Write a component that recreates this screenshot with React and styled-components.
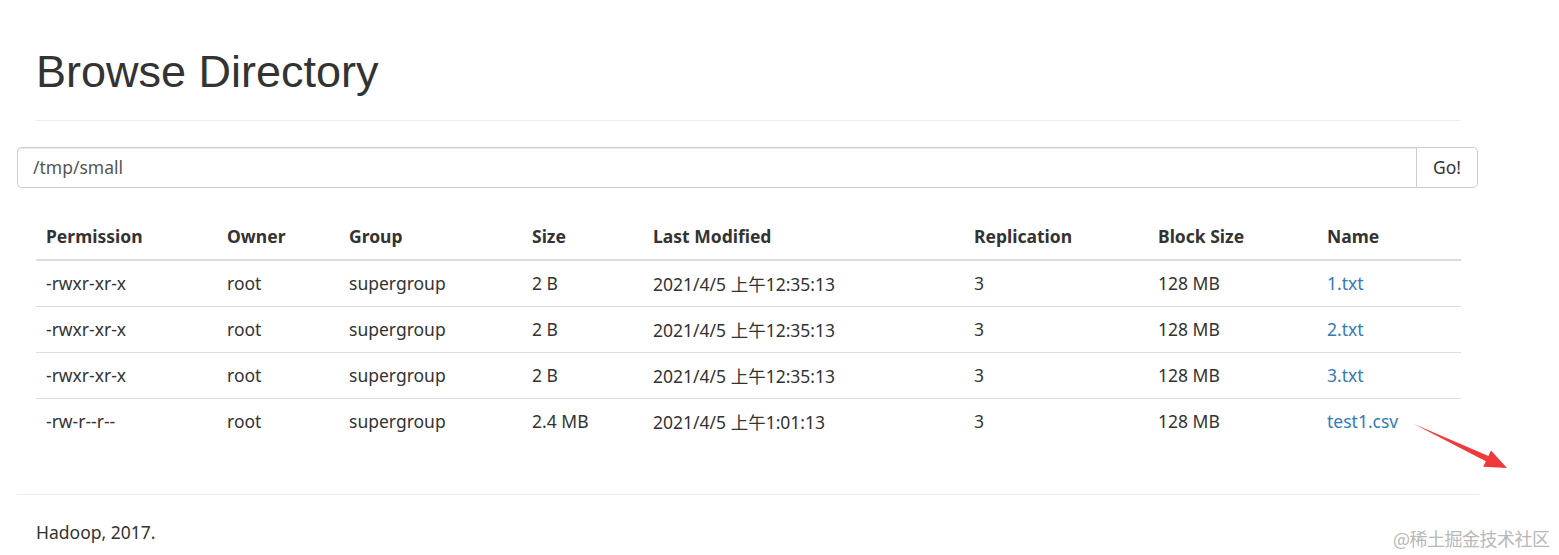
import React from "react";
import styled, { createGlobalStyle } from "styled-components";

const GlobalStyle = createGlobalStyle`
  body {
    margin: 0;
    background: #fff;
    color: #333;
    font-family: "Noto Sans", "Noto Sans CJK SC", sans-serif;
    font-size: 17.5px;
  }
`;

const files = [
  { perm: "-rwxr-xr-x", owner: "root", group: "supergroup", size: "2 B", modified: "2021/4/5 上午12:35:13", repl: "3", block: "128 MB", name: "1.txt" },
  { perm: "-rwxr-xr-x", owner: "root", group: "supergroup", size: "2 B", modified: "2021/4/5 上午12:35:13", repl: "3", block: "128 MB", name: "2.txt" },
  { perm: "-rwxr-xr-x", owner: "root", group: "supergroup", size: "2 B", modified: "2021/4/5 上午12:35:13", repl: "3", block: "128 MB", name: "3.txt" },
  { perm: "-rw-r--r--", owner: "root", group: "supergroup", size: "2.4 MB", modified: "2021/4/5 上午1:01:13", repl: "3", block: "128 MB", name: "test1.csv" },
];

const columns = [
  { label: "Permission", width: 181 },
  { label: "Owner", width: 122 },
  { label: "Group", width: 183 },
  { label: "Size", width: 121 },
  { label: "Last Modified", width: 321 },
  { label: "Replication", width: 184 },
  { label: "Block Size", width: 169 },
  { label: "Name", width: 144 },
];

const App = () => {
  return (
    <>
      <GlobalStyle />
      <Page>
        <PageHeader>
          <Title>Browse Directory</Title>
        </PageHeader>

        <InputGroup>
          <PathInput defaultValue="/tmp/small" />
          <GoButton>Go!</GoButton>
        </InputGroup>

        <TableWrap>
          <Table>
            <colgroup>
              {columns.map((c) => (
                <col key={c.label} style={{ width: c.width }} />
              ))}
            </colgroup>
            <thead>
              <tr>
                {columns.map((c) => (
                  <Th key={c.label}>{c.label}</Th>
                ))}
              </tr>
            </thead>
            <tbody>
              {files.map((f) => (
                <tr key={f.name}>
                  <Td>{f.perm}</Td>
                  <Td>{f.owner}</Td>
                  <Td>{f.group}</Td>
                  <Td>{f.size}</Td>
                  <Td>{f.modified}</Td>
                  <Td>{f.repl}</Td>
                  <Td>{f.block}</Td>
                  <Td>
                    <FileLink href="#">{f.name}</FileLink>
                  </Td>
                </tr>
              ))}
            </tbody>
          </Table>
        </TableWrap>

        <Footer>
          <FooterText>Hadoop, 2017.</FooterText>
        </Footer>
      </Page>

      {/* annotation arrow drawn over the screenshot */}
      <Arrow width="110" height="60" viewBox="0 0 110 60">
        <polygon
          points="9,9 83.4,40.9 86,35.5 102,53 78.2,51.7 80.8,46.3"
          fill="#f0393b"
        />
      </Arrow>
      <Watermark>@稀土掘金技术社区</Watermark>
    </>
  );
};

const Page = styled.div`
  margin-left: 17px;
  width: 1462px;
`;

const PageHeader = styled.div`
  margin: 0 19px 26px;
  padding-top: 47px;
  padding-bottom: 11px;
  border-bottom: 1px solid #eee;
`;

const Title = styled.h1`
  margin: 0 0 12px;
  font-family: "Liberation Sans", Arial, sans-serif;
  font-weight: 500;
  font-size: 45px;
  line-height: 1.1;
  color: #333;
`;

const InputGroup = styled.div`
  display: flex;
  height: 41px;
  width: 1461px;
`;

const PathInput = styled.input`
  flex: 1;
  box-sizing: border-box;
  height: 41px;
  padding: 0 15px;
  border: 1px solid #ccc;
  border-right: none;
  border-radius: 5px 0 0 5px;
  font-family: "Noto Sans", sans-serif;
  font-size: 17.5px;
  color: #555;
  box-shadow: inset 0 1px 1px rgba(0, 0, 0, 0.075);
  outline: none;
`;

const GoButton = styled.button`
  box-sizing: border-box;
  width: 62px;
  height: 41px;
  background: #fff;
  border: 1px solid #ccc;
  border-radius: 0 5px 5px 0;
  font-family: "Noto Sans", sans-serif;
  font-size: 17.5px;
  color: #333;
  padding: 0;
`;

const TableWrap = styled.div`
  padding: 27px 19px 0;
`;

const Table = styled.table`
  width: 1425px;
  border-collapse: collapse;
  table-layout: fixed;
`;

const Th = styled.th`
  box-sizing: border-box;
  text-align: left;
  font-weight: 700;
  height: 45px;
  padding: 0 10px 2px;
  vertical-align: middle;
  border-bottom: 2px solid #ddd;
  white-space: nowrap;
`;

const Td = styled.td`
  height: 45px;
  padding: 0 10px;
  vertical-align: middle;
  border-top: 1px solid #ddd;
  white-space: nowrap;
`;

const FileLink = styled.a`
  color: #337ab7;
  text-decoration: none;
`;

const Footer = styled.div`
  margin-top: 50px;
  border-top: 1px solid #eee;
  padding: 25px 19px;
`;

const FooterText = styled.p`
  margin: 0;
  line-height: 25px;
`;

const Arrow = styled.svg`
  position: absolute;
  left: 1405px;
  top: 415px;
`;

const Watermark = styled.div`
  position: absolute;
  left: 1393px;
  top: 525px;
  font-family: "Noto Sans CJK SC", sans-serif;
  font-size: 18px;
  color: #b8b8b8;
  letter-spacing: -0.5px;
`;

export default App;
